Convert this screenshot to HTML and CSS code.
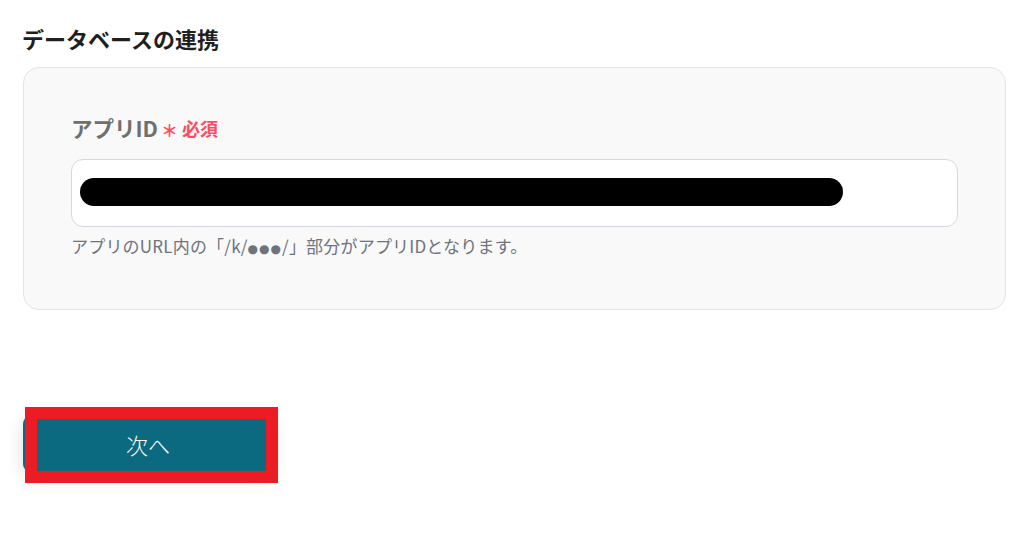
FILE: index.html
```html
<!DOCTYPE html>
<html lang="ja">
<head>
    <meta charset="UTF-8">
    <meta name="viewport" content="width=device-width, initial-scale=1.0">
    <title>データベースの連携</title>
    <link rel="stylesheet" href="styles.css">
</head>
<body>
    <div class="page">
        <h2 class="sectionTitle">データベースの連携</h2>

        <section class="card">
            <div class="fieldLabel">
                アプリID<span class="required"><span class="star">＊</span>必須</span>
            </div>
            <div class="inputBox">
                <!-- 値はマスクされている -->
                <div class="mask"></div>
            </div>
            <p class="help">アプリのURL内の「/k/<span class="dots">●●●</span>/」部分がアプリIDとなります。</p>
        </section>

        <div class="actions">
            <button class="nextButton" type="button">次へ</button>
            <div class="highlight"></div>
        </div>
    </div>
</body>
</html>
```

FILE: styles.css
```css
body {
    margin: 0;
    background-color: #ffffff;
    font-family: "Noto Sans CJK JP", "Noto Sans", sans-serif;
}

.page {
    padding: 23px 19px 72px 23px;
}

.sectionTitle {
    margin: 0 0 13px -1px;
    font-size: 22px;
    line-height: 31px;
    font-weight: bold;
    color: #1f1f1f;
}

.card {
    border: 1px solid #e3e4e8;
    border-radius: 16px;
    background-color: #f9f9fa;
    padding: 45px 47px 48px 47px;
}

.fieldLabel {
    display: flex;
    align-items: center;
    height: 30px;
    font-size: 21.5px;
    line-height: 30px;
    font-weight: bold;
    color: #6f6f6f;
}

.required {
    display: flex;
    align-items: center;
    height: 30px;
    margin-left: 3px;
    font-size: 18px;
    color: #ff4a62;
}

.star {
    font-size: 17px;
    line-height: 30px;
    margin-right: 4px;
    position: relative;
    top: 2px;
}

.inputBox {
    margin-top: 16px;
    height: 68px;
    box-sizing: border-box;
    border: 1px solid #d5d8de;
    border-radius: 12px;
    background-color: #ffffff;
    padding: 18px 8px;
}

.mask {
    width: 763px;
    height: 28px;
    border-radius: 14px;
    background-color: #000000;
}

.help {
    margin: 7px 0 0 0;
    font-size: 17px;
    line-height: 24px;
    letter-spacing: 0.2px;
    color: #6e737c;
}

.dots {
    font-family: "DejaVu Sans", sans-serif;
    font-size: 12px;
    letter-spacing: 1px;
}

.actions {
    position: relative;
    margin-top: 106px;
    width: 250px;
}

.nextButton {
    display: block;
    width: 250px;
    height: 56px;
    border: none;
    border-radius: 8px;
    background-color: #0b6a80;
    color: #ffffff;
    font-family: "Noto Sans CJK JP", sans-serif;
    font-size: 22px;
    font-weight: 300;
    box-shadow: 0 4px 18px rgba(0, 0, 0, 0.14);
    cursor: pointer;
}

/* 赤い枠で囲む注釈 */
.highlight {
    position: absolute;
    left: 2px;
    top: -9px;
    width: 253px;
    height: 76px;
    box-sizing: border-box;
    border: 12px solid #ec1c24;
}
```
